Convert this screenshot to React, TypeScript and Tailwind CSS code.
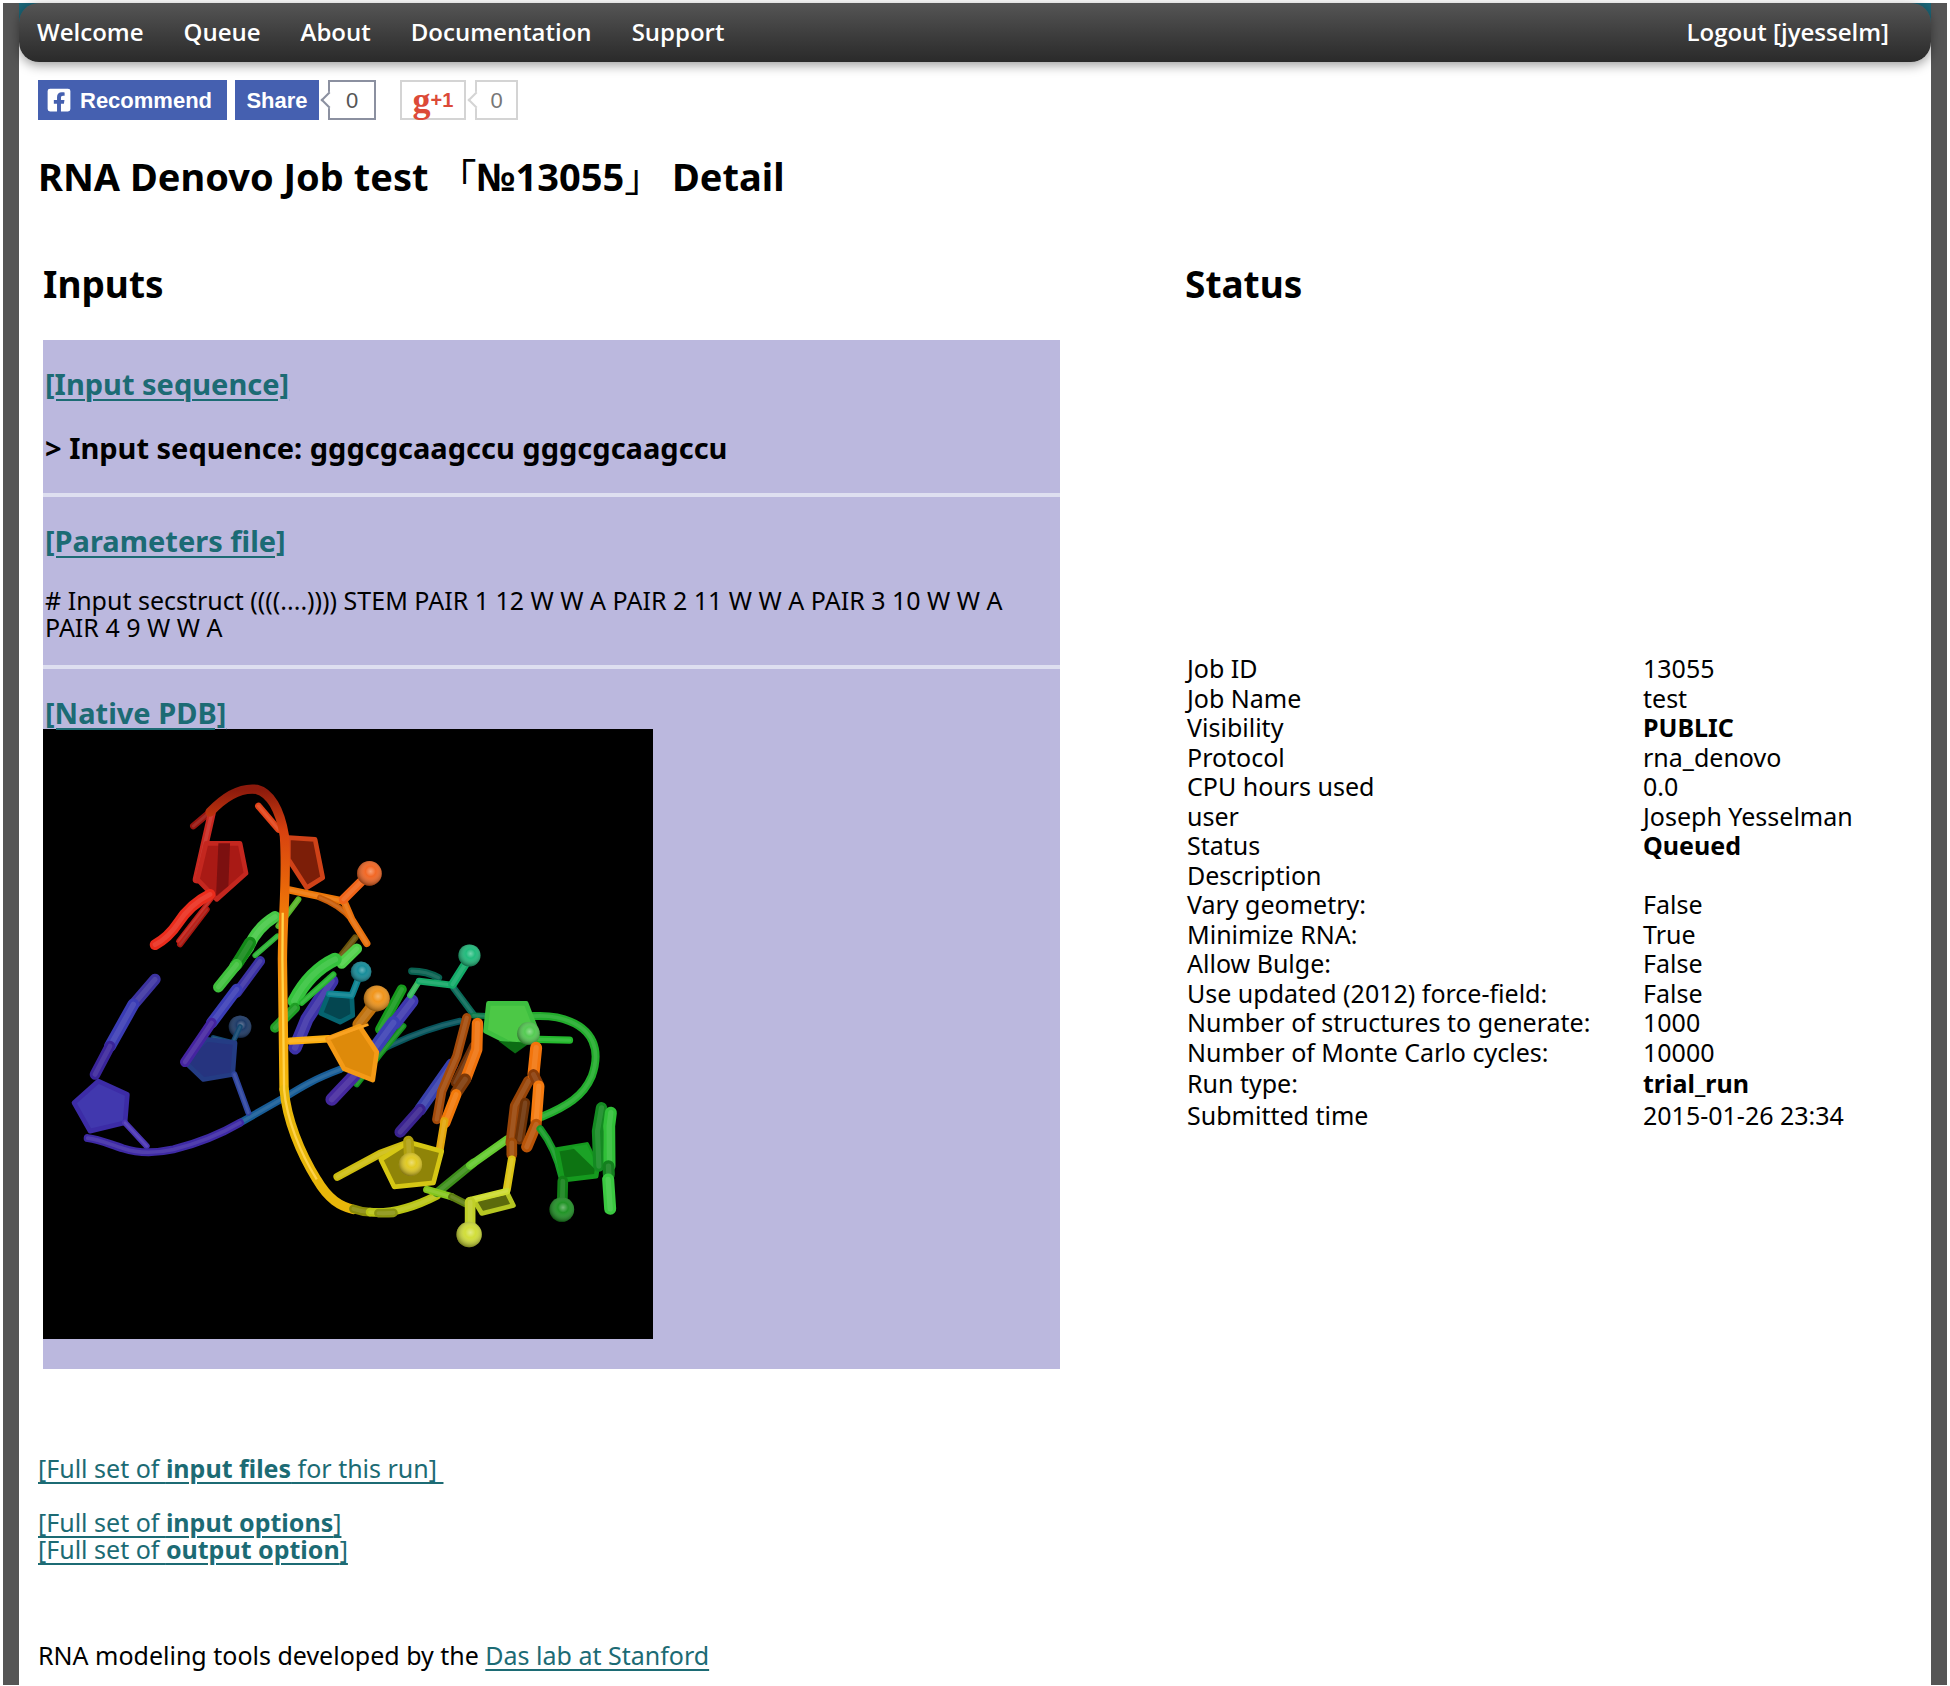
import React from 'react';
import { FaFacebookSquare } from 'react-icons/fa';

interface JobField {
    label: string;
    value: string;
    bold?: boolean;
}

const navItems = ['Welcome', 'Queue', 'About', 'Documentation', 'Support'];

const jobFields: JobField[] = [
    { label: 'Job ID', value: '13055' },
    { label: 'Job Name', value: 'test' },
    { label: 'Visibility', value: 'PUBLIC', bold: true },
    { label: 'Protocol', value: 'rna_denovo' },
    { label: 'CPU hours used', value: '0.0' },
    { label: 'user', value: 'Joseph Yesselman' },
    { label: 'Status', value: 'Queued', bold: true },
    { label: 'Description', value: '' },
    { label: 'Vary geometry:', value: 'False' },
    { label: 'Minimize RNA:', value: 'True' },
    { label: 'Allow Bulge:', value: 'False' },
    { label: 'Use updated (2012) force-field:', value: 'False' },
    { label: 'Number of structures to generate:', value: '1000' },
    { label: 'Number of Monte Carlo cycles:', value: '10000' },
    { label: 'Run type:', value: 'trial_run', bold: true },
    { label: 'Submitted time', value: '2015-01-26 23:34' },
];

// A stick or ribbon of the molecule: solid stroke with a lighter core
const Tube: React.FC<{ d: string; color: string; width?: number }> = ({ d, color, width = 20 }) => (
    <g fill="none" strokeLinecap="round" strokeLinejoin="round">
        <path d={d} stroke={color} strokeWidth={width} />
        <path d={d} stroke="#fff" strokeOpacity={0.1} strokeWidth={width * 0.45} />
    </g>
);

// Sugar ring
const Ring: React.FC<{ points: string; fill: string; stroke: string }> = ({ points, fill, stroke }) => (
    <polygon points={points} fill={fill} stroke={stroke} strokeWidth={14} strokeLinejoin="round" />
);

const Ball: React.FC<{ cx: number; cy: number; r: number; color: string }> = ({ cx, cy, r, color }) => (
    <g>
        <circle cx={cx} cy={cy} r={r} fill={color} />
        <circle cx={cx} cy={cy} r={r} fill="url(#ballShade)" />
    </g>
);

const NativeStructure: React.FC = () => (
    <svg viewBox="9 9 1830 1830" className="block w-[60%] bg-black" role="img" aria-label="Native PDB structure">
        <defs>
            <radialGradient id="ballShade" cx="0.55" cy="0.42" r="0.6">
                <stop offset="0" stopColor="#fff" stopOpacity="0.4" />
                <stop offset="0.35" stopColor="#fff" stopOpacity="0.05" />
                <stop offset="1" stopColor="#000" stopOpacity="0.45" />
            </radialGradient>
            <linearGradient id="mainStrand" gradientUnits="userSpaceOnUse" x1="0" y1="190" x2="0" y2="1450">
                <stop offset="0" stopColor="#8c1a0c" />
                <stop offset="0.1" stopColor="#d8420f" />
                <stop offset="0.28" stopColor="#ee7408" />
                <stop offset="0.5" stopColor="#f79c0c" />
                <stop offset="0.75" stopColor="#f2bd08" />
                <stop offset="1" stopColor="#c5b30c" />
            </linearGradient>
        </defs>

        {/* Blue strand */}
        <Tube d="M1260 885 C1190 900 1110 930 1050 958 L900 1030" color="#07545c" width={20} />
        <Tube d="M900 1030 C820 1060 780 1085 740 1110 L600 1190" color="#175c96" width={22} />
        <Tube d="M345 760 L285 830" color="#3c33a0" width={34} />
        <Tube d="M280 835 L210 960" color="#3a3cb4" width={36} />
        <Tube d="M210 960 L165 1045" color="#39249a" width={32} />
        <Ring points="175,1065 262,1105 255,1190 150,1215 102,1130" fill="#4138ae" stroke="#3c2ca6" />
        <Tube d="M255 1190 L320 1260" color="#4a35b4" width={18} />
        <Tube d="M600 1190 C540 1225 480 1250 400 1270 C340 1283 290 1280 250 1267 C210 1255 180 1240 143 1236" color="#3e2aa4" width={24} />

        <Ball cx={600} cy={902} r={34} color="#12305f" />
        <Tube d="M600 902 L578 950 L520 935" color="#134870" width={16} />
        <Ring points="500,940 585,950 578,1045 490,1060 432,1005" fill="#26347f" stroke="#243c84" />
        <Tube d="M583 1045 L625 1160" color="#2e459f" width={18} />
        <Tube d="M660 705 L590 800" color="#3b32a4" width={30} />
        <Tube d="M590 790 L515 890" color="#3a3db6" width={34} />
        <Tube d="M515 890 L435 1008" color="#4424a0" width={30} />

        {/* Green bases behind the main strand */}
        <Tube d="M775 520 L715 600" color="#57b528" width={18} />
        <Tube d="M712 630 L645 688" color="#2eb436" width={16} />
        <Tube d="M705 572 Q650 605 625 665 L585 720" color="#46c846" width={34} />
        <Tube d="M630 650 L590 715" color="#138a18" width={36} />
        <Tube d="M590 715 L535 783" color="#3fc03c" width={32} />
        <Tube d="M875 765 L800 880 L765 965" color="#3d32a8" width={40} />
        <Tube d="M945 635 L890 705" color="#6a520a" width={20} />
        <Tube d="M950 668 L905 712" color="#4fd048" width={32} />
        <Tube d="M885 700 Q810 735 762 825" color="#35c33d" width={40} />
        <Tube d="M880 745 L785 830" color="#25b52e" width={18} />
        <Tube d="M765 845 L705 905" color="#1f9e25" width={30} />

        {/* Teal nucleotide */}
        <Ring points="865,805 935,810 938,868 900,888 842,862" fill="#044650" stroke="#056470" />
        <Tube d="M960 745 L935 808 L868 803" color="#0b8290" width={20} />
        <Ball cx={963} cy={737} r={31} color="#0b8795" />

        {/* Red nucleotides */}
        <Tube d="M460 300 L505 262" color="#97150f" width={20} />
        <Tube d="M515 262 L495 350 L470 460" color="#c82820" width={24} />
        <Ring points="498,352 600,352 618,442 530,520 472,460" fill="#a91a15" stroke="#c4271f" />
        <polygon points="535,352 570,352 565,480 528,510" fill="#7c1010" />
        <Tube d="M500 550 L420 655" color="#a8170f" width={18} />
        <Tube d="M520 510 L415 645" color="#c01f17" width={14} />
        <Tube d="M510 505 Q450 535 415 590 Q385 635 345 656" color="#ea2c1c" width={32} />
        <Tube d="M655 240 L715 310" color="#e2441a" width={20} />
        <Ring points="745,335 825,340 848,455 800,485 745,400" fill="#7c1e08" stroke="#cf4218" />

        {/* Orange branch */}
        <Tube d="M750 492 C810 505 860 515 910 525" color="#ec7708" width={22} />
        <Tube d="M840 515 C880 530 910 550 935 580" color="#c95d08" width={18} />
        <Tube d="M910 522 L935 580 L980 652" color="#e8700c" width={22} />
        <Tube d="M910 520 L975 455" color="#f06418" width={28} />
        <Ball cx={988} cy={442} r={37} color="#f2601a" />

        {/* Purple and green sticks in the middle */}
        <Tube d="M1085 790 L1020 910" color="#169a1c" width={30} />
        <Tube d="M1090 900 L1020 985 L950 1075" color="#12901e" width={18} />
        <Tube d="M1115 825 L1065 890" color="#3e38ae" width={40} />
        <Tube d="M1060 890 L1005 965" color="#3a3fb4" width={40} />
        <Tube d="M960 1030 L875 1120" color="#44289e" width={38} />
        <Tube d="M1235 1015 L1140 1150" color="#3840ac" width={36} />
        <Tube d="M1140 1150 L1080 1218" color="#3a2390" width={34} />

        {/* Red to yellow main strand */}
        <path
            d="M510 258 C560 205 610 185 650 190 C690 200 720 250 733 330 C742 460 728 560 727 700 L732 1090"
            fill="none"
            stroke="url(#mainStrand)"
            strokeWidth={28}
            strokeLinecap="round"
        />
        <path
            d="M732 1090 C740 1180 780 1280 830 1360 C865 1420 900 1440 940 1450"
            fill="none"
            stroke="#e8b60a"
            strokeWidth={28}
            strokeLinecap="round"
        />
        <path d="M728 560 L727 700 L732 1090 C740 1180 780 1280 830 1360" fill="none" stroke="#ffd24a" strokeWidth={7} />
        <Tube d="M940 1448 Q965 1457 990 1458" color="#8a8c0a" width={26} />
        <Tube d="M990 1458 Q1080 1465 1190 1408" color="#b9c414" width={26} />
        <Tube d="M1015 1461 Q1040 1462 1060 1460" color="#8a9410" width={26} />

        {/* Green strand on the right */}
        <Tube d="M1190 1400 L1300 1310" color="#3d8f1a" width={26} />
        <Tube d="M1290 1318 L1400 1240" color="#63c92e" width={24} />
        <Tube d="M1505 1172 C1580 1140 1630 1110 1655 1050 C1680 980 1670 900 1550 874 Q1520 868 1480 870" color="#22ac2c" width={24} />

        {/* Orange nucleotide */}
        <Tube d="M750 945 L865 938" color="#fcae10" width={22} />
        <Tube d="M1005 830 L955 895" color="#bf700c" width={36} />
        <Ring points="862,938 958,900 1010,978 998,1062 912,1028" fill="#de8a0a" stroke="#f49a16" />
        <path d="M862 938 L985 895" stroke="#f9a222" strokeWidth={8} />
        <Ball cx={1010} cy={817} r={39} color="#f09010" />

        {/* Green nucleotide */}
        <Tube d="M1115 735 Q1160 735 1195 755" color="#086050" width={22} />
        <Tube d="M1110 808 L1137 765" color="#36b95c" width={18} />
        <Tube d="M1137 765 L1235 777" color="#14a866" width={20} />
        <Tube d="M1240 785 L1300 865" color="#0a6a58" width={20} />
        <Tube d="M1300 868 L1340 870" color="#0c7a4c" width={18} />
        <Tube d="M1237 775 L1275 715" color="#12aa68" width={26} />
        <Ball cx={1288} cy={688} r={33} color="#16b876" />
        <Ring points="1345,832 1458,832 1490,915 1425,960 1336,915" fill="#4cc846" stroke="#3ebf40" />
        <polygon points="1375,945 1470,950 1425,982" fill="#0c6c14" />
        <Tube d="M1495 940 L1588 942" color="#23b82c" width={22} />
        <Ball cx={1465} cy={922} r={34} color="#4cc94a" />

        {/* Orange bases */}
        <Tube d="M1280 875 L1250 990 L1205 1095 L1190 1180" color="#a34a0a" width={28} />
        <Tube d="M1300 960 L1245 1070" color="#6e3006" width={26} />
        <Tube d="M1312 892 L1310 970 L1278 1055" color="#ef720d" width={34} />
        <Tube d="M1275 1060 L1248 1100" color="#7c3807" width={36} />
        <Tube d="M1248 1105 L1215 1190" color="#f2790a" width={32} />
        <Tube d="M1213 1185 L1198 1275" color="#e2a50a" width={24} />
        <Tube d="M1465 1065 L1425 1140 L1412 1250" color="#984407" width={32} />
        <Tube d="M1455 1130 L1438 1240" color="#6e3206" width={30} />
        <Tube d="M1488 965 L1480 1045" color="#f2740c" width={36} />
        <Tube d="M1480 1045 L1495 1075" color="#8a3c08" width={32} />
        <Tube d="M1496 1080 L1488 1185" color="#f57b10" width={34} />
        <Tube d="M1488 1195 L1460 1262" color="#b95408" width={34} />
        <Tube d="M1415 1250 L1415 1285" color="#a04c08" width={32} />
        <Tube d="M1415 1300 L1400 1390" color="#dcc413" width={24} />

        {/* Yellow nucleotide */}
        <Tube d="M1095 1255 L1020 1283 L892 1352" color="#cdbd10" width={24} />
        <Ring points="1105,1248 1205,1275 1180,1370 1062,1382 1022,1300" fill="#8f8408" stroke="#d6c714" />
        <Tube d="M1105 1245 L1108 1300" color="#b0a00e" width={32} />
        <Ball cx={1111} cy={1315} r={35} color="#e0c818" />

        {/* Lime nucleotide */}
        <Tube d="M1160 1390 L1235 1412" color="#84c61c" width={22} />
        <Tube d="M1235 1412 L1275 1432" color="#5c7d10" width={22} />
        <Ring points="1300,1420 1400,1398 1420,1438 1325,1462" fill="#5c6a0c" stroke="#b5c622" />
        <Tube d="M1290 1422 L1400 1395" color="#cddc30" width={20} />
        <Tube d="M1290 1428 L1290 1500" color="#c0cf28" width={32} />
        <Ball cx={1287} cy={1525} r={38} color="#cfdd30" />

        {/* Green nucleotide at the right edge */}
        <Tube d="M1500 1208 Q1545 1265 1565 1350" color="#159a26" width={22} />
        <Ring points="1550,1270 1640,1255 1672,1320 1668,1350 1568,1362" fill="#0d7412" stroke="#159a1e" />
        <polygon points="1595,1262 1640,1255 1672,1320 1660,1325" fill="#1ba326" />
        <Tube d="M1568 1365 L1566 1440" color="#128018" width={32} />
        <Ball cx={1565} cy={1450} r={37} color="#168f1c" />
        <Tube d="M1684 1145 L1672 1215 L1676 1320" color="#148a22" width={34} />
        <Tube d="M1712 1160 L1707 1200 L1708 1320" color="#30bf38" width={36} />
        <Tube d="M1705 1320 L1706 1345" color="#13801e" width={36} />
        <Tube d="M1704 1360 L1710 1448" color="#3ac840" width={36} />
    </svg>
);

const NavLink: React.FC<{ text: string }> = ({ text }) => (
    <a href="#" className="font-['Open_Sans',sans-serif] text-[24px] leading-7 font-semibold text-white">
        {text}
    </a>
);

const linkClass = 'text-[#1c6b74] underline decoration-2 underline-offset-4';

const App: React.FC = () => {
    return (
        <div className="bg-white p-[3px] font-['Noto_Sans','Noto_Sans_CJK_JP',sans-serif] text-[25px] leading-[27px] text-black">
            <div className="bg-[#555] px-4">
                <div className="bg-white pb-4">
                    <div className="bg-linear-to-b from-[#1b6577] from-50% to-white to-50%">
                        <nav className="flex h-[59px] items-center justify-between rounded-t-[20px] rounded-b-[20px] bg-linear-to-b from-[#555] to-[#2a2a2a] pr-[42px] pb-[2px] pl-[18px] shadow-[0_3px_12px_rgba(0,0,0,0.4)]">
                            <div className="flex gap-10">
                                {navItems.map((item) => (
                                    <NavLink key={item} text={item} />
                                ))}
                            </div>
                            <NavLink text="Logout [jyesselm]" />
                        </nav>
                    </div>

                    <main className="px-[19px] pt-[18px]">
                        {/* Social buttons */}
                        <div className="flex h-10 items-stretch font-['Liberation_Sans',sans-serif] text-[22px] font-bold">
                            <button type="button" className="flex w-[189px] items-center gap-2 bg-[#4560b0] pl-2 text-white">
                                <FaFacebookSquare size={26} />
                                Recommend
                            </button>
                            <button type="button" className="ml-2 w-[84px] bg-[#4560b0] text-white">
                                Share
                            </button>
                            <div className="relative ml-[9px] flex w-12 items-center justify-center border-2 border-[#8b90a0] font-normal text-[#555]">
                                <span className="absolute top-3 -left-[7px] h-3 w-3 rotate-45 border-b-2 border-l-2 border-[#8b90a0] bg-white" />
                                0
                            </div>
                            <button type="button" className="ml-6 flex w-[66px] items-center justify-center border-2 border-[#d4d4d4] text-[#dc4a38]">
                                <span className="font-['Liberation_Serif',serif] text-[36px] leading-8 font-bold">g</span>
                                <span className="text-[20px]">+1</span>
                            </button>
                            <div className="relative ml-[9px] flex w-[43px] items-center justify-center border-2 border-[#d4d4d4] font-normal text-[#777]">
                                <span className="absolute top-3 -left-[7px] h-3 w-3 rotate-45 border-b-2 border-l-2 border-[#d4d4d4] bg-white" />
                                0
                            </div>
                        </div>

                        <h1 className="mt-[34px] text-[38px] leading-[44px] font-bold">
                            RNA Denovo Job test <span className="font-normal">「</span>№13055<span className="font-normal">」</span> Detail
                        </h1>

                        <div className="mt-16 grid grid-cols-[1147fr_727fr]">
                            <section className="pr-[125px] pl-[5px]">
                                <h2 className="text-[37px] leading-[44px] font-bold">Inputs</h2>
                                <div className="mt-[34px] flex flex-col gap-1 bg-[#dedff0]">
                                    <div className="bg-[#bbb8de] px-[2px] pt-7 pb-[29px] text-[29px] leading-8 font-bold">
                                        <h3>
                                            <a href="#" className={linkClass}>[Input sequence]</a>
                                        </h3>
                                        <p className="mt-8">&gt; Input sequence: gggcgcaagccu gggcgcaagccu</p>
                                    </div>
                                    <div className="bg-[#bbb8de] px-[2px] pt-7 pb-6">
                                        <h3 className="text-[29px] leading-8 font-bold">
                                            <a href="#" className={linkClass}>[Parameters file]</a>
                                        </h3>
                                        <p className="mt-[30px] pr-5">
                                            # Input secstruct ((((....)))) STEM PAIR 1 12 W W A PAIR 2 11 W W A PAIR 3 10 W W A PAIR 4 9 W W A
                                        </p>
                                    </div>
                                    <div className="bg-[#bbb8de] pt-7 pb-[30px]">
                                        <h3 className="px-[2px] text-[29px] leading-8 font-bold">
                                            <a href="#" className={linkClass}>[Native PDB]</a>
                                        </h3>
                                        <NativeStructure />
                                    </div>
                                </div>
                            </section>

                            <section>
                                <h2 className="text-[37px] leading-[44px] font-bold">Status</h2>
                                <table className="mt-[348px] w-full">
                                    <tbody>
                                        {jobFields.map((field) => (
                                            <tr key={field.label} className="h-[29px] even:h-[30px] nth-last-[-n+2]:h-[32px]">
                                                <th scope="row" className="w-[63%] p-0 pl-[2px] text-left font-normal">{field.label}</th>
                                                <td className={field.bold ? 'p-0 font-bold' : 'p-0'}>{field.value}</td>
                                            </tr>
                                        ))}
                                    </tbody>
                                </table>
                            </section>
                        </div>

                        <div className="mt-[86px]">
                            <p>
                                <a href="#" className={linkClass}>[Full set of <b>input files</b> for this run]&nbsp;</a>
                            </p>
                            <p className="mt-[27px]">
                                <a href="#" className={linkClass}>[Full set of <b>input options</b>]</a>
                                <br />
                                <a href="#" className={linkClass}>[Full set of <b>output option</b>]</a>
                            </p>
                        </div>

                        <footer className="mt-[79px]">
                            RNA modeling tools developed by the <a href="#" className={linkClass}>Das lab at Stanford</a>
                        </footer>
                    </main>
                </div>
            </div>
        </div>
    );
};

export default App
